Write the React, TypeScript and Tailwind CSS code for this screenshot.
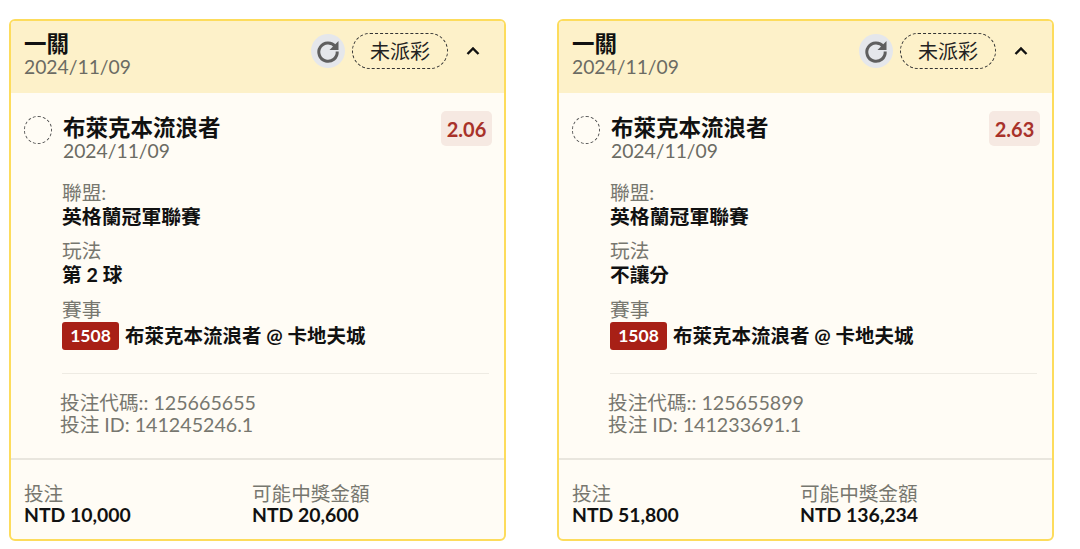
const FONT = "font-['Lato','Noto_Sans_CJK_TC',sans-serif]";

function Refresh() {
  return (
    <div className="w-[34px] h-[34px] rounded-full bg-[#e5e7eb] flex items-center justify-center">
      <svg width="26" height="26" viewBox="0 0 26 26" fill="none">
        <path d="M20.3 8.5A9.2 9.2 0 1 0 22.2 13.5" stroke="#5f5f5f" strokeWidth="3" />
        <path d="M23.5 3v9h-9z" fill="#5f5f5f" />
      </svg>
    </div>
  );
}

function Card({ odds, market, code, id, stake, win }: any) {
  return (
    <div className="w-[497px] h-[522px] border-2 border-[#fddc5c] rounded-[6px] bg-[#fffcf5] flex flex-col overflow-hidden">
      <div className="h-[72px] bg-[#fdf1c9] flex justify-between pl-[13px] pr-[23px]">
        <div className="pt-[11px]">
          <div className="text-[22.5px] leading-[24px] font-bold text-[#111]">一關</div>
          <div className="text-[19.3px] leading-[22px] text-[#6b6b63]">2024/11/09</div>
        </div>
        <div className="flex items-center gap-[7px] h-[59px]">
          <Refresh />
          <div className="w-[96px] h-[36px] rounded-full border-[1.5px] border-dashed border-[#333] flex items-center justify-center text-[20px] text-[#222]">未派彩</div>
          <svg className="ml-[10px]" width="16" height="16" viewBox="0 0 16 16" fill="none">
            <path d="M2.5 11L8 5.5l5.5 5.5" stroke="#111" strokeWidth="2.4" />
          </svg>
        </div>
      </div>

      <div className="flex-1 pl-[13px] pr-[12px] pt-[18px]">
        <div className="flex justify-between">
          <div className="flex gap-[11px]">
            <div className="w-[28px] h-[28px] mt-[5px] rounded-full border-[1.5px] border-dashed border-[#555]" />
            <div className="pt-[4px]">
              <div className="text-[22.5px] leading-[26px] font-bold text-[#111]">布萊克本流浪者</div>
              <div className="text-[19.3px] leading-[19px] text-[#6b6b63]">2024/11/09</div>
            </div>
          </div>
          <div className="w-[51px] h-[35px] rounded-[5px] bg-[#f6e9e2] flex items-center justify-center text-[20px] font-bold text-[#a8322a]">{odds}</div>
        </div>

        <div className="pl-[38px] mt-[22px]">
          <div className="text-[19.7px] leading-[22px] text-[#77776f]">聯盟:</div>
          <div className="text-[19.85px] leading-[24px] font-bold text-[#111]">英格蘭冠軍聯賽</div>
          <div className="text-[19.7px] leading-[22px] text-[#77776f] mt-[12px]">玩法</div>
          <div className="text-[19.7px] leading-[24px] font-bold text-[#111] mt-[1px]">{market}</div>
          <div className="text-[19.7px] leading-[22px] text-[#77776f] mt-[12px]">賽事</div>
          <div className="flex items-center gap-[6px] mt-[1px] h-[28px]">
            <div className="w-[57px] h-[28px] rounded-[3px] bg-[#a82016] text-white text-[17.5px] font-bold flex items-center justify-center">1508</div>
            <div className="text-[19.5px] font-bold text-[#111]">布萊克本流浪者 @ 卡地夫城</div>
          </div>
        </div>

        <div className="mt-[23px] ml-[38px] mr-[3px] border-t border-[#eeebe3]" />
        <div className="pl-[36px] mt-[18px] text-[19.65px] leading-[22px] text-[#77776f]">
          <div>投注代碼:: {code}</div>
          <div>投注 ID: {id}</div>
        </div>
      </div>

      <div className="h-[81px] border-t-2 border-[#e9e6de] pl-[13px] pt-[23px] flex">
        <div className="w-[228px]">
          <div className="text-[19.6px] leading-[21px] text-[#77776f]">投注</div>
          <div className="text-[19.4px] leading-[21px] font-bold text-[#111]">{stake}</div>
        </div>
        <div>
          <div className="text-[19.6px] leading-[21px] text-[#77776f]">可能中獎金額</div>
          <div className="text-[19.4px] leading-[21px] font-bold text-[#111]">{win}</div>
        </div>
      </div>
    </div>
  );
}

export default function App() {
  return (
    <div className={`w-[1080px] h-[549px] bg-white pt-[19px] pl-[9px] flex gap-[51px] ${FONT}`}>
      <Card odds="2.06" market="第 2 球" code="125665655" id="141245246.1" stake="NTD 10,000" win="NTD 20,600" />
      <Card odds="2.63" market="不讓分" code="125655899" id="141233691.1" stake="NTD 51,800" win="NTD 136,234" />
    </div>
  );
}
